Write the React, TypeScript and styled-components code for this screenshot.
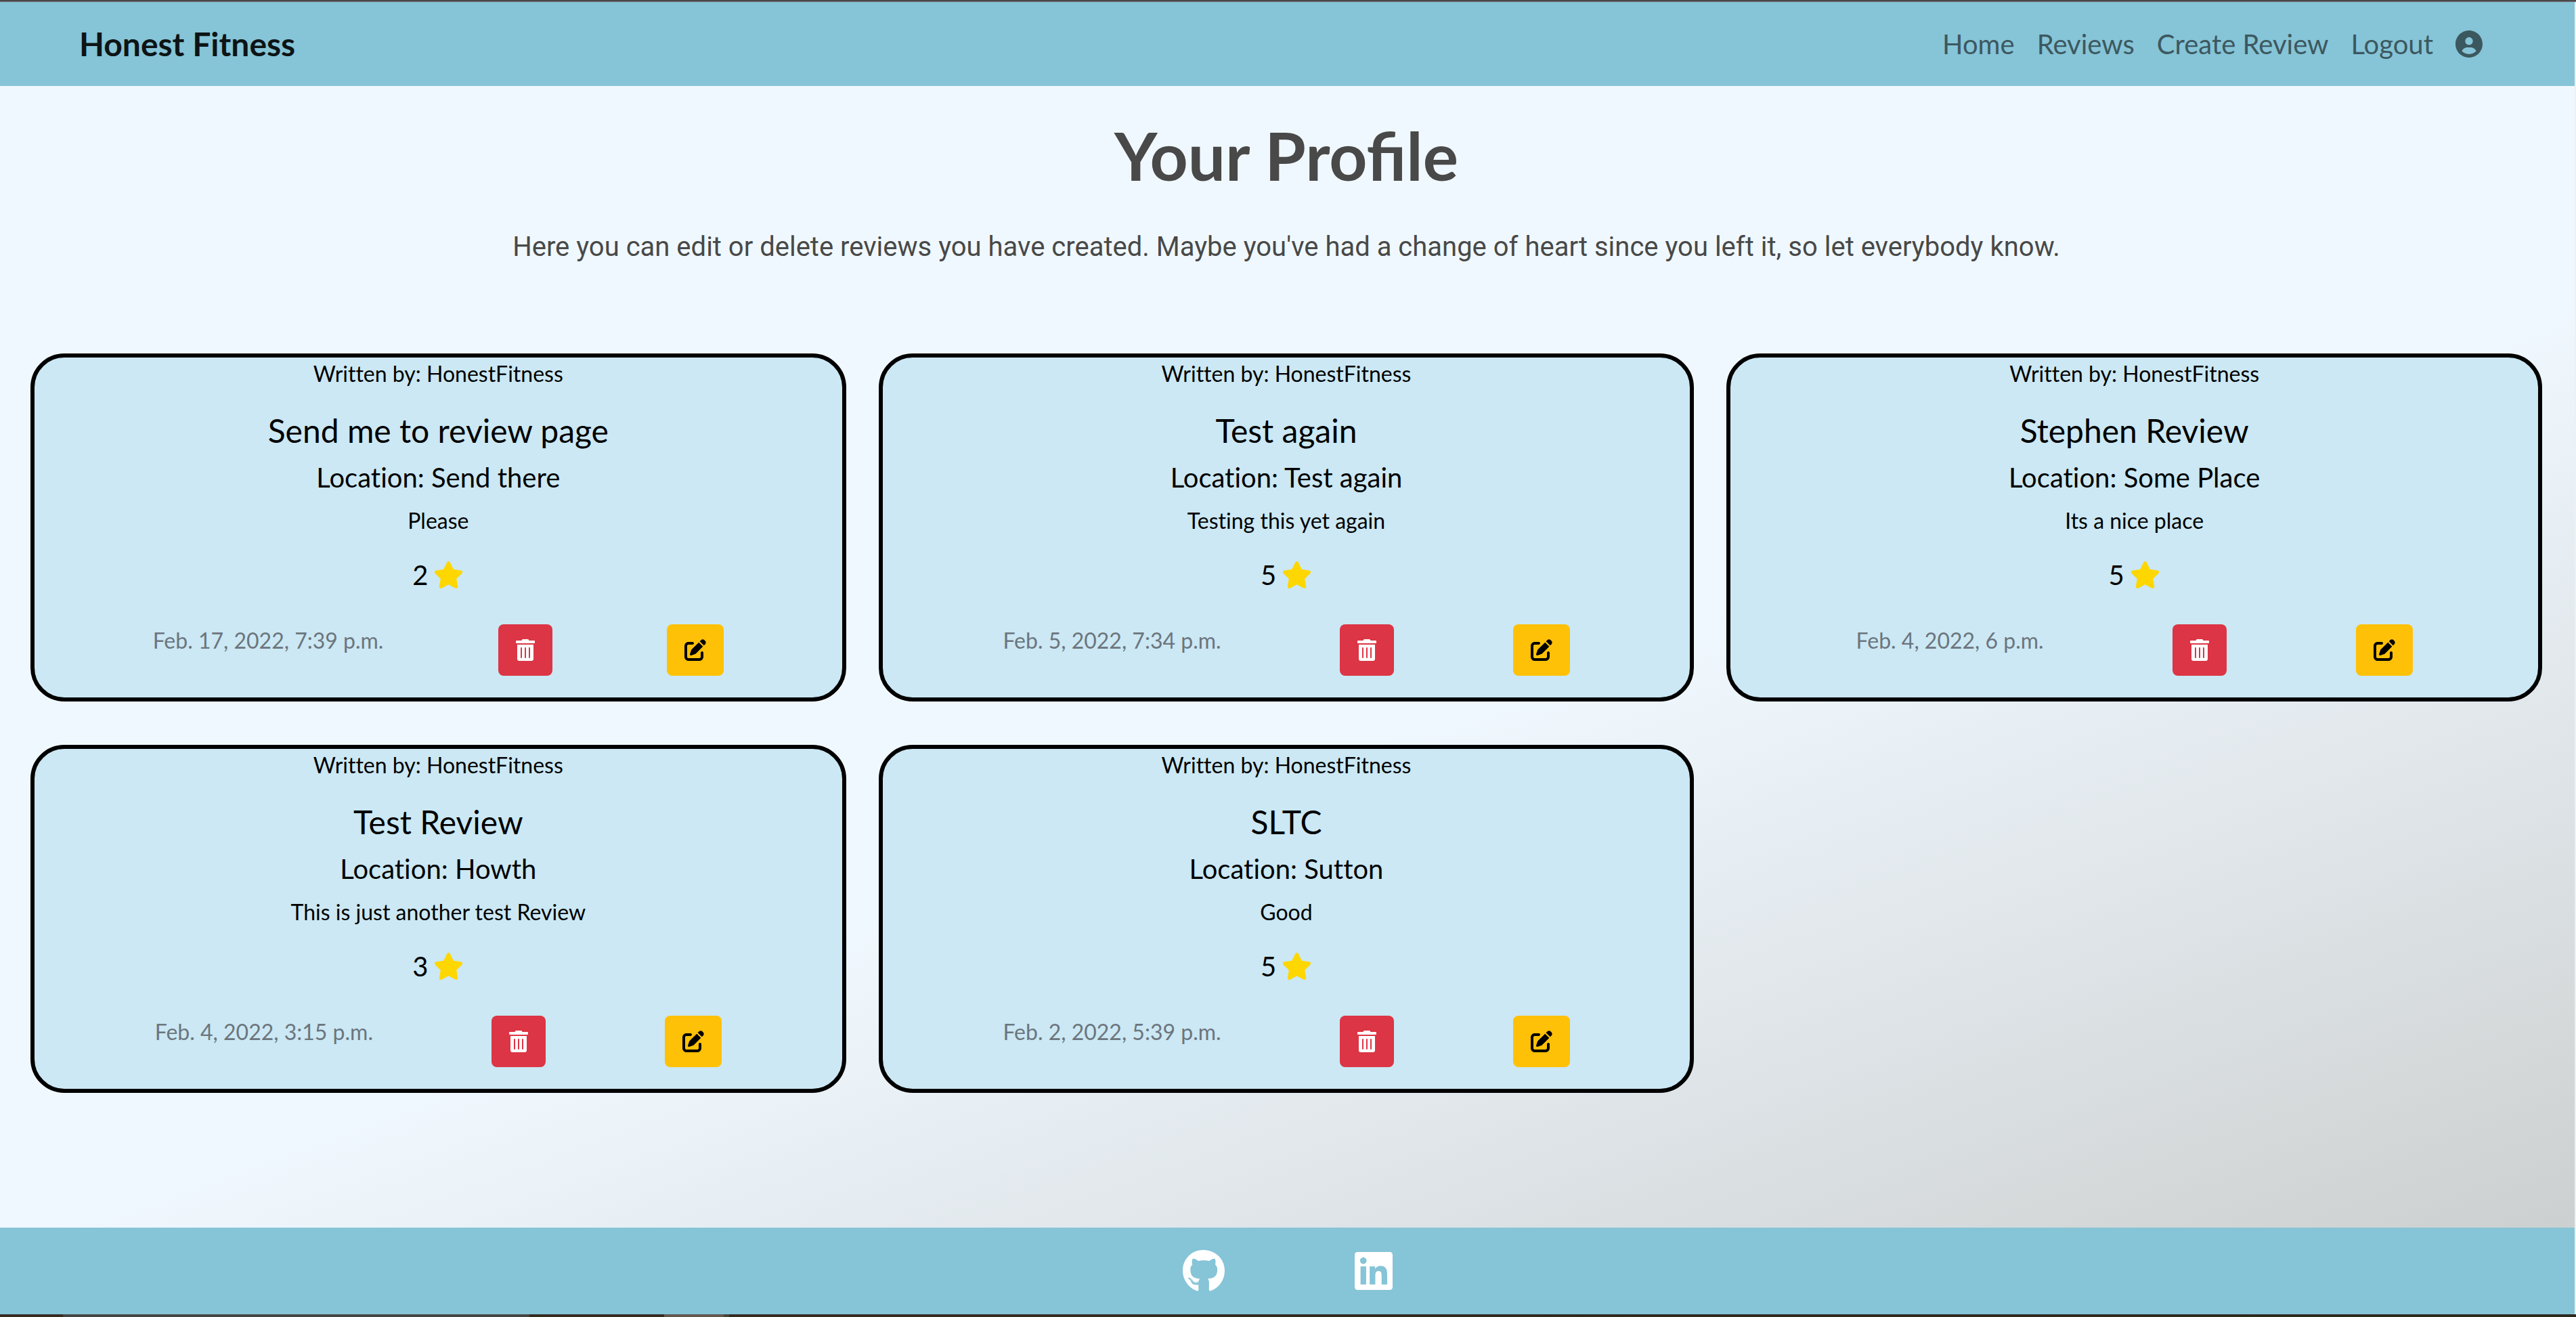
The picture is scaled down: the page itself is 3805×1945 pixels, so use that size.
import React from "react";
import styled, { createGlobalStyle } from "styled-components";
import { FaTrashAlt, FaGithub, FaLinkedin } from "react-icons/fa";
import { FaPenToSquare, FaStar } from "react-icons/fa6";

const GlobalStyle = createGlobalStyle`
  *, *::before, *::after { box-sizing: border-box; }
  body {
    margin: 0;
    font-family: Lato, "Liberation Sans", sans-serif;
    font-size: 32px;
    line-height: 48px;
    font-variant-ligatures: none;
    color: #000;
    background: #f0f8ff;
  }
  h1, h2, h3, p, ul { margin: 0; padding: 0; }
`;

const Page = styled.div`
  display: flex;
  flex-direction: column;
  min-height: 100vh;
  background: linear-gradient(160deg, #f0f8ff 55%, #c9cccb 100%);
`;

const TopEdge = styled.div`
  height: 3px;
  border-top: 1px solid #3a383b;
  background: #656264;
`;

const BottomEdge = styled.div`
  height: 4px;
  background: linear-gradient(
    90deg,
    #352c20 93px,
    #454444 93px 782px,
    #352c20 782px 981px,
    #62584e 981px 1069px,
    #47443a 1069px 1077px,
    #352c20 1077px,
    #2c2a1f
  );
`;

const Content = styled.div`
  display: flex;
  flex-direction: column;
  flex: 1;
  border-right: 2px solid #f0f0f0;
`;

const Header = styled.header`
  display: flex;
  align-items: center;
  justify-content: space-between;
  height: 124px;
  padding: 0 120px 0 117px;
  background: #86c4d7;
`;

const Brand = styled.a`
  font-size: 48px;
  line-height: 72px;
  font-weight: 700;
  color: #0d1415;
  text-decoration: none;
`;

const NavList = styled.ul`
  display: flex;
  align-items: center;
  gap: 1px;
  list-style: none;
`;

const NavLink = styled.a`
  display: flex;
  align-items: center;
  padding: 0 16px;
  font-size: 40px;
  line-height: 60px;
  color: #3c585f;
  text-decoration: none;
`;

const Main = styled.main`
  flex: 1;
  padding: 44px 48px 0 45px;
`;

const Title = styled.h1`
  font-size: 98px;
  line-height: 116px;
  font-weight: 700;
  font-variant-ligatures: normal;
  text-align: center;
  color: #484948;
`;

const Intro = styled.p`
  padding: 46px 0 125px;
  font-family: Roboto, "Liberation Sans", sans-serif;
  font-size: 40px;
  line-height: 64px;
  text-align: center;
  color: #484948;
`;

const Reviews = styled.section`
  display: grid;
  grid-template-columns: repeat(3, 1fr);
  gap: 64px 48px;
`;

const Card = styled.article`
  padding-bottom: 32px;
  border: 6px solid #000;
  border-radius: 50px;
  background: #cbe8f4;
  text-align: center;
`;

const CardTitle = styled.h2`
  padding-top: 31px;
  font-size: 48px;
  line-height: 58px;
  font-weight: 400;
`;

const Place = styled.h3`
  padding: 16px 0;
  font-size: 40px;
  line-height: 48px;
  font-weight: 400;
`;

const Rating = styled.p`
  display: flex;
  align-items: center;
  justify-content: center;
  gap: 8px;
  padding: 32px 0 49px;
  font-size: 40px;
  line-height: 48px;
`;

const Star = styled(FaStar)`
  width: 45px;
  height: 40px;
  color: #ffd700;
`;

const CardFooter = styled.div`
  display: flex;
  justify-content: space-around;
  align-items: flex-start;
  padding: 0 90px;
`;

const Posted = styled.time`
  color: #6c757d;
`;

const IconButton = styled.button<{ $tone: "danger" | "warning" }>`
  display: flex;
  align-items: center;
  justify-content: center;
  height: 76px;
  padding: 0 26px;
  border: 0;
  border-radius: 8px;
  color: ${(p) => (p.$tone === "danger" ? "#fff" : "#000")};
  background: ${(p) => (p.$tone === "danger" ? "#dc3545" : "#ffc107")};

  svg {
    width: ${(p) => (p.$tone === "danger" ? "28px" : "32px")};
    height: 32px;
  }
`;

const Footer = styled.footer`
  display: flex;
  justify-content: center;
  align-items: center;
  gap: 192px;
  height: 128px;
  background: #86c4d7;
`;

const SocialLink = styled.a<{ $width: number }>`
  display: flex;
  color: #fff;

  svg {
    width: ${(p) => p.$width}px;
    height: 64px;
  }
`;

const UserIcon = () => (
  <svg width="40" height="40" viewBox="0 0 512 512" fill="currentColor" aria-hidden="true">
    <path d="M256 0C114.6 0 0 114.6 0 256s114.6 256 256 256s256-114.6 256-256S397.4 0 256 0zM256 128c39.77 0 72 32.24 72 72S295.8 272 256 272c-39.76 0-72-32.24-72-72S216.2 128 256 128zM256 448c-52.93 0-100.9-21.53-135.7-56.29C136.5 349.9 176.5 320 224 320h64c47.54 0 87.54 29.88 103.7 71.71C356.9 426.5 308.9 448 256 448z" />
  </svg>
);

const links = ["Home", "Reviews", "Create Review", "Logout"];

const reviews = [
  { title: "Send me to review page", place: "Send there", text: "Please", stars: 2, date: "Feb. 17, 2022, 7:39 p.m." },
  { title: "Test again", place: "Test again", text: "Testing this yet again", stars: 5, date: "Feb. 5, 2022, 7:34 p.m." },
  { title: "Stephen Review", place: "Some Place", text: "Its a nice place", stars: 5, date: "Feb. 4, 2022, 6 p.m." },
  { title: "Test Review", place: "Howth", text: "This is just another test Review", stars: 3, date: "Feb. 4, 2022, 3:15 p.m." },
  { title: "SLTC", place: "Sutton", text: "Good", stars: 5, date: "Feb. 2, 2022, 5:39 p.m." },
];

export default function App() {
  return (
    <Page>
      <GlobalStyle />
      <TopEdge />
      <Content>
        <Header>
          <Brand href="#">Honest Fitness</Brand>
          <nav>
            <NavList>
              {links.map((label) => (
                <li key={label}>
                  <NavLink href="#">{label}</NavLink>
                </li>
              ))}
              <li>
                <NavLink href="#" aria-label="Profile">
                  <UserIcon />
                </NavLink>
              </li>
            </NavList>
          </nav>
        </Header>
        <Main>
          <Title>Your Profile</Title>
          <Intro>
            Here you can edit or delete reviews you have created. Maybe you've had a change of heart since you left
            it, so let everybody know.
          </Intro>
          <Reviews>
            {reviews.map((r) => (
              <Card key={r.title}>
                <p>Written by: HonestFitness</p>
                <CardTitle>{r.title}</CardTitle>
                <Place>Location: {r.place}</Place>
                <p>{r.text}</p>
                <Rating>
                  {r.stars}
                  <Star />
                </Rating>
                <CardFooter>
                  <Posted>{r.date}</Posted>
                  <IconButton $tone="danger" type="button" aria-label="Delete review">
                    <FaTrashAlt />
                  </IconButton>
                  <IconButton $tone="warning" type="button" aria-label="Edit review">
                    <FaPenToSquare />
                  </IconButton>
                </CardFooter>
              </Card>
            ))}
          </Reviews>
        </Main>
        <Footer>
          <SocialLink $width={62} href="#" aria-label="GitHub">
            <FaGithub />
          </SocialLink>
          <SocialLink $width={56} href="#" aria-label="LinkedIn">
            <FaLinkedin />
          </SocialLink>
        </Footer>
      </Content>
      <BottomEdge />
    </Page>
  );
}
